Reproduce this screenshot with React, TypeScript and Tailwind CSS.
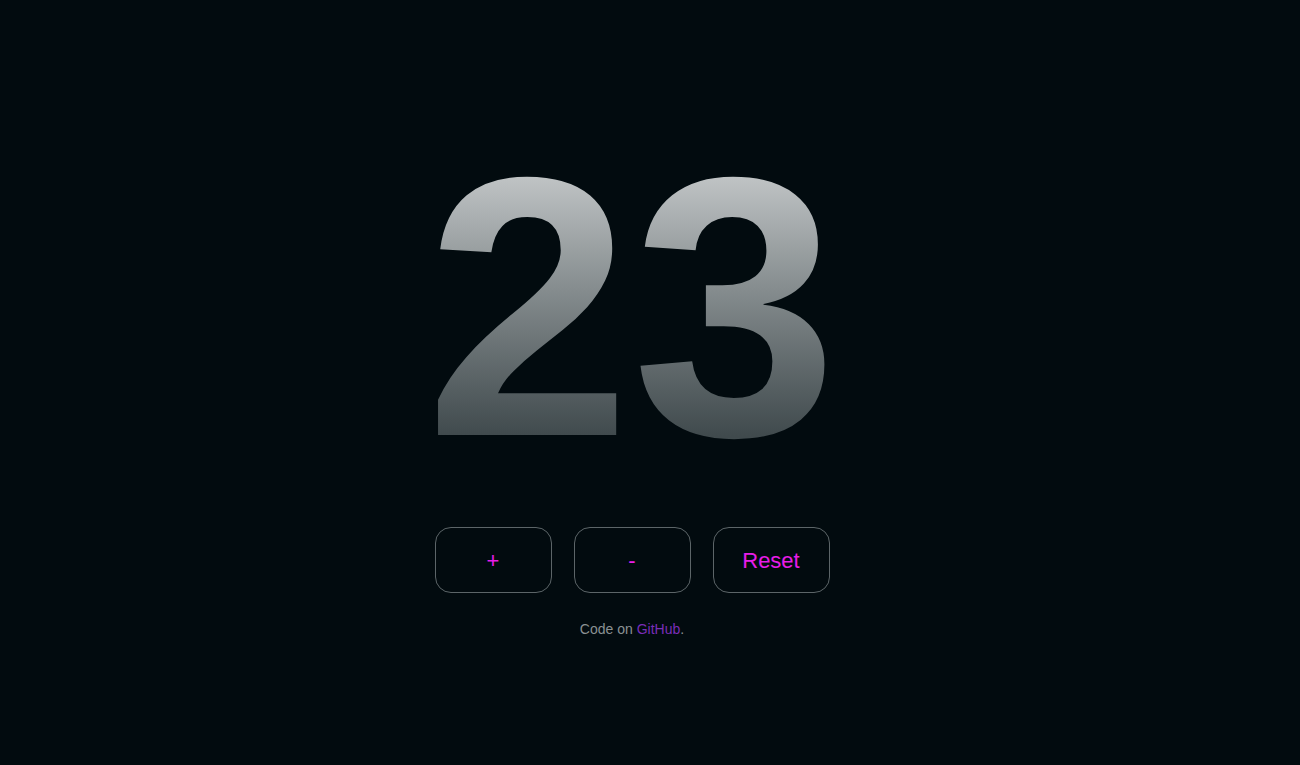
export default function App() {
  return (
    <div className="min-h-[765px] w-full bg-[#020b0f] flex flex-col items-center pt-[122px] pr-[36px] font-['Liberation_Sans',Arial,sans-serif]">
      {/* counter value */}
      <div className="text-[370px] leading-none font-bold tracking-[1px] bg-linear-to-b from-[#c3c7c8] from-[13%] to-[#404a4d] to-[85%] bg-clip-text text-transparent">
        23
      </div>

      <div className="flex gap-[22px] mt-[35px]">
        <button className="w-[117px] h-[66px] rounded-2xl border border-[#5c6568] text-[22px] text-[#e81de8]">
          +
        </button>
        <button className="w-[117px] h-[66px] rounded-2xl border border-[#5c6568] text-[22px] text-[#e81de8]">
          -
        </button>
        <button className="w-[117px] h-[66px] rounded-2xl border border-[#5c6568] text-[22px] text-[#e81de8]">
          Reset
        </button>
      </div>

      <p className="mt-[26px] text-sm text-[#8a9193]">
        Code on <a className="text-[#7a2db8]">GitHub</a>.
      </p>
    </div>
  );
}
